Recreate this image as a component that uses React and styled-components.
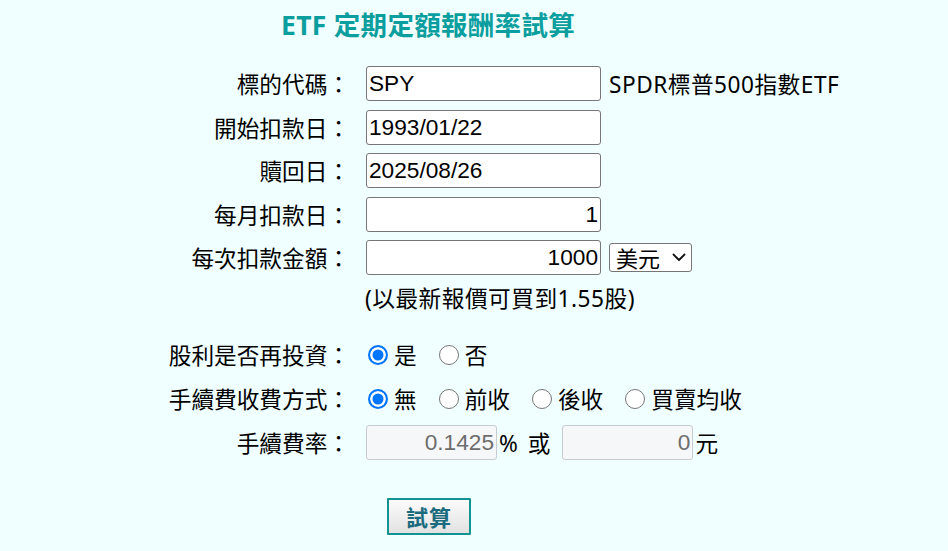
import React, { useState } from "react";
import styled, { createGlobalStyle } from "styled-components";

const GlobalStyle = createGlobalStyle`
    html, body {
        margin: 0;
        padding: 0;
        background: #f0ffff;
    }
    body {
        font-family: "Noto Sans", "Noto Sans CJK TC", sans-serif;
        color: #000;
    }
`;

const Page = styled.div`
    width: 856px;
    padding-top: 8px;
`;

const Title = styled.h2`
    margin: 0;
    height: 54px;
    line-height: 34px;
    text-align: center;
    font-size: 26.5px;
    font-weight: 700;
    color: #0a9e9e;
    letter-spacing: 0.3px;
`;

const Form = styled.div`
    display: flex;
    flex-direction: column;
`;

const Row = styled.div`
    display: flex;
    align-items: center;
    height: ${(p) => p.$h || 43.5}px;
    margin-top: ${(p) => p.$mt || 0}px;
`;

const Label = styled.div`
    width: 190px;
    margin-left: 160px;
    margin-right: 16px;
    text-align: right;
    font-size: 22.67px;
    white-space: nowrap;
`;

const Field = styled.div`
    display: flex;
    align-items: center;
    font-size: 22.67px;
    white-space: nowrap;
`;

const TextInput = styled.input`
    box-sizing: border-box;
    width: ${(p) => p.$w || 235}px;
    height: 35px;
    padding: 1px 2px;
    border: 1px solid ${(p) => (p.disabled ? "#c9cccf" : "#767676")};
    border-radius: 3px;
    background: ${(p) => (p.disabled ? "#f6f7f8" : "#fff")};
    color: ${(p) => (p.disabled ? "#6d6d6d" : "#000")};
    font-family: "Liberation Sans", Arial, sans-serif;
    font-size: 22.67px;
    text-align: ${(p) => (p.$right ? "right" : "left")};
    outline: none;
`;

const Note = styled.span`
    margin-left: 8px;
    letter-spacing: 0.5px;
`;

const SelectBox = styled.label`
    position: relative;
    display: inline-flex;
    align-items: center;
    margin-left: 8px;

    select {
        box-sizing: border-box;
        appearance: none;
        width: 83px;
        height: 29px;
        padding: 0 24px 0 6px;
        border: 1px solid #767676;
        border-radius: 3px;
        background: #fff;
        font-family: "Noto Sans CJK TC", sans-serif;
        font-size: 22px;
        line-height: 27px;
        color: #000;
        outline: none;
    }

    svg {
        position: absolute;
        right: 6px;
        top: 10px;
        pointer-events: none;
    }
`;

const Hint = styled.span`
    margin-left: 365px;
    font-size: 22.67px;
    letter-spacing: 0.5px;
`;

const Option = styled.label`
    display: inline-flex;
    align-items: center;
    margin-right: 20px;
    cursor: pointer;

    &:last-child {
        margin-right: 0;
    }
`;

const Radio = styled.input`
    appearance: none;
    box-sizing: border-box;
    width: 20px;
    height: 20px;
    margin: 0 6px 0 2px;
    border: 1.5px solid #767676;
    border-radius: 50%;
    background: #fff;

    &:checked {
        border: 2px solid #0075ff;
        background: #0075ff;
        box-shadow: inset 0 0 0 2.5px #fff;
    }
`;

const Unit = styled.span`
    margin: 0 ${(p) => p.$mr || 0}px 0 2px;
    word-spacing: 4px;
`;

const ButtonRow = styled.div`
    display: flex;
    justify-content: center;
    margin-top: 33px;
    padding-left: 2px;
`;

const CalcButton = styled.button`
    box-sizing: border-box;
    width: 84px;
    height: 37px;
    padding: 0;
    border: 2px solid #139292;
    border-radius: 1px;
    background: linear-gradient(#fbfbfb, #e2e2e2);
    color: #1a6b7e;
    font-family: "Noto Sans CJK TC", sans-serif;
    font-size: 22px;
    font-weight: 700;
    letter-spacing: 1px;
    cursor: pointer;
`;

function RadioGroup({ name, options, value, onChange }) {
    return (
        <Field>
            {options.map((opt) => (
                <Option key={opt}>
                    <Radio type="radio" name={name} checked={value === opt} onChange={() => onChange(opt)} />
                    {opt}
                </Option>
            ))}
        </Field>
    );
}

export default function App() {
    const [reinvest, setReinvest] = useState("是");
    const [feeType, setFeeType] = useState("無");

    return (
        <>
            <GlobalStyle />
            <Page>
                <Title>ETF 定期定額報酬率試算</Title>
                <Form>
                    <Row>
                        <Label>標的代碼：</Label>
                        <Field>
                            <TextInput defaultValue="SPY" />
                            <Note>SPDR標普500指數ETF</Note>
                        </Field>
                    </Row>
                    <Row>
                        <Label>開始扣款日：</Label>
                        <Field>
                            <TextInput defaultValue="1993/01/22" />
                        </Field>
                    </Row>
                    <Row>
                        <Label>贖回日：</Label>
                        <Field>
                            <TextInput defaultValue="2025/08/26" />
                        </Field>
                    </Row>
                    <Row>
                        <Label>每月扣款日：</Label>
                        <Field>
                            <TextInput $right defaultValue="1" />
                        </Field>
                    </Row>
                    <Row>
                        <Label>每次扣款金額：</Label>
                        <Field>
                            <TextInput $right defaultValue="1000" />
                            <SelectBox>
                                <select defaultValue="USD">
                                    <option value="USD">美元</option>
                                    <option value="TWD">台幣</option>
                                </select>
                                <svg width="14" height="9" viewBox="0 0 14 9" fill="none">
                                    <path d="M1.5 1.5 L7 7 L12.5 1.5" stroke="#111" strokeWidth="1.8" strokeLinecap="round" strokeLinejoin="round" />
                                </svg>
                            </SelectBox>
                        </Field>
                    </Row>
                    <Row $h={36.5}>
                        <Hint>(以最新報價可買到1.55股)</Hint>
                    </Row>
                    <Row $h={44} $mt={16.5}>
                        <Label>股利是否再投資：</Label>
                        <RadioGroup name="reinvest" options={["是", "否"]} value={reinvest} onChange={setReinvest} />
                    </Row>
                    <Row $h={44}>
                        <Label>手續費收費方式：</Label>
                        <RadioGroup name="fee" options={["無", "前收", "後收", "買賣均收"]} value={feeType} onChange={setFeeType} />
                    </Row>
                    <Row $h={44}>
                        <Label>手續費率：</Label>
                        <Field>
                            <TextInput $w={131} $right disabled defaultValue="0.1425" />
                            <Unit $mr={12}>% 或</Unit>
                            <TextInput $w={131} $right disabled defaultValue="0" />
                            <Unit>元</Unit>
                        </Field>
                    </Row>
                </Form>
                <ButtonRow>
                    <CalcButton type="button">試算</CalcButton>
                </ButtonRow>
            </Page>
        </>
    );
}
